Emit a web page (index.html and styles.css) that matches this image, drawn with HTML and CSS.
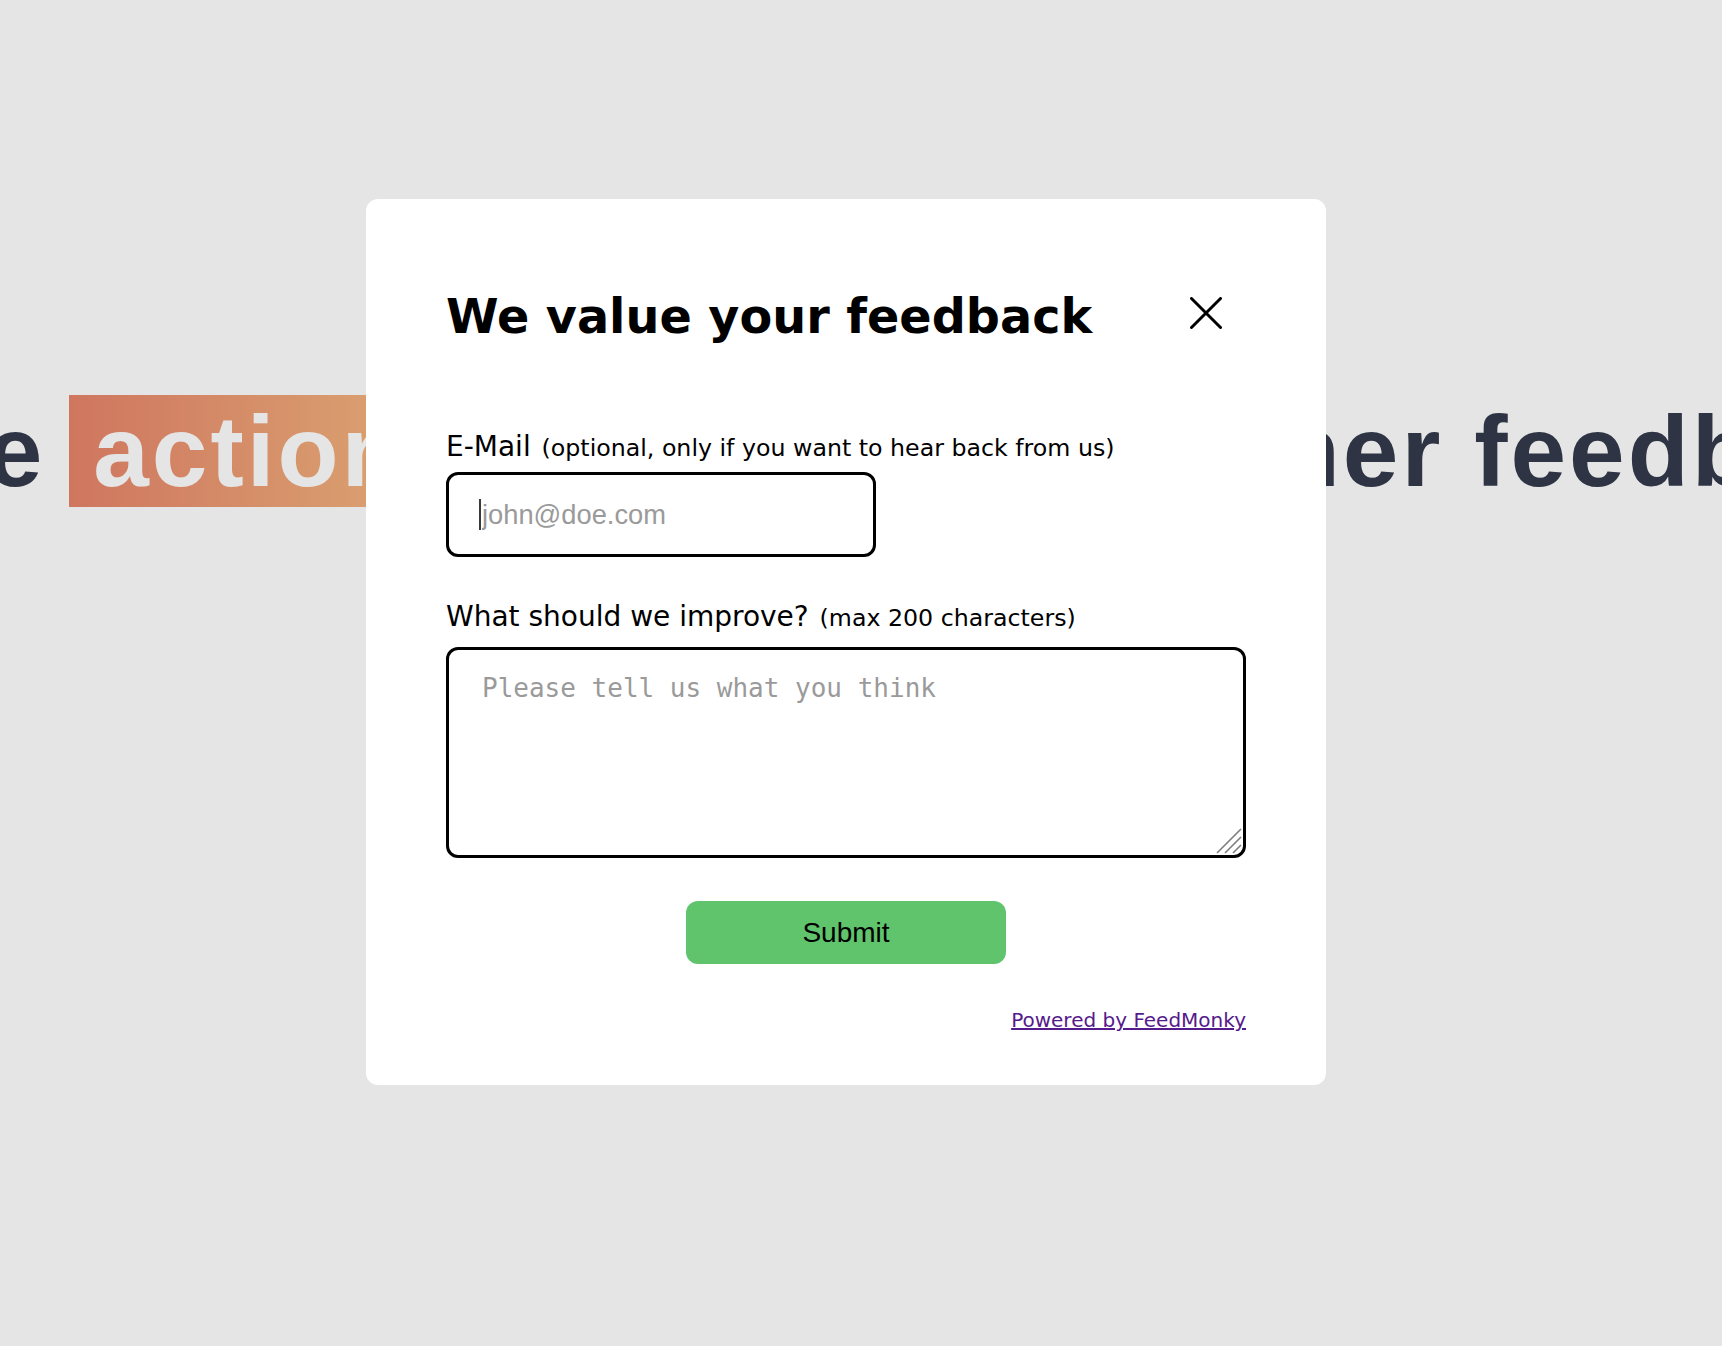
FILE: index.html
```html
<!DOCTYPE html>
<html lang="en">
<head>
<meta charset="utf-8">
<title>FeedMonky</title>
<link rel="stylesheet" href="styles.css">
</head>
<body>
  <main class="hero">
    <h2 class="hero-title">Drive <span class="hero-mark">action</span> based on customer feedback</h2>
  </main>

  <div class="modal" role="dialog" aria-labelledby="fm-title">
    <div class="modal-head">
      <h1 id="fm-title" class="modal-title">We value your feedback</h1>
      <button class="close-btn" type="button" aria-label="Close">
        <svg width="32" height="32" viewBox="0 0 32 32" fill="none" stroke="#000" stroke-width="3" stroke-linecap="round">
          <path d="M1.5 1.5 L30.5 30.5 M30.5 1.5 L1.5 30.5"/>
        </svg>
      </button>
    </div>

    <form class="modal-form">
      <label class="field-label" for="fm-email">E-Mail <span class="hint">(optional, only if you want to hear back from us)</span></label>
      <div class="email-wrap">
        <input id="fm-email" class="email-input" type="email" placeholder="john@doe.com">
        <span class="caret" aria-hidden="true"></span>
      </div>

      <label class="field-label field-label--second" for="fm-text">What should we improve? <span class="hint">(max 200 characters)</span></label>
      <div class="text-wrap">
        <textarea id="fm-text" class="text-input" placeholder="Please tell us what you think"></textarea>
        <svg class="resize-grip" width="26" height="26" viewBox="0 0 26 26" fill="none" stroke="#7d7d7d" stroke-width="1.6">
          <path d="M1 25 L25 1 M9 25 L25 9 M17 25 L25 17"/>
        </svg>
      </div>

      <div class="actions">
        <button class="submit-btn" type="button">Submit</button>
      </div>
    </form>

    <p class="powered"><a href="#" class="powered-link">Powered by FeedMonky</a></p>
  </div>
</body>
</html>
```

FILE: styles.css
```css
html, body {
  margin: 0;
  padding: 0;
}

body {
  background: #e5e5e5;
  width: 1722px;
  height: 1346px;
  overflow: hidden;
  position: relative;
}

.hero {
  display: flex;
  justify-content: center;
  padding-top: 394px;
}

.hero-title {
  margin: 0;
  padding-right: 10px;
  flex: none;
  white-space: nowrap;
  font-family: "Liberation Sans", Arial, sans-serif;
  font-weight: 700;
  font-size: 100px;
  line-height: 115px;
  letter-spacing: 3px;
  color: #2e3444;
}

.hero-mark {
  margin-left: -7px;
  padding: 0 39px 0 24px;
  color: #e5e5e5;
  background: linear-gradient(to right, #cf765f, #dca873);
}

.modal {
  position: absolute;
  left: 366px;
  top: 199px;
  width: 960px;
  box-sizing: border-box;
  padding: 89.5px 80px 53px;
  background: #fff;
  border-radius: 12px;
  font-family: "DejaVu Sans", Verdana, sans-serif;
  color: #000;
}

.modal-head {
  display: flex;
  justify-content: space-between;
  align-items: flex-start;
}

.modal-title {
  margin: 0;
  font-size: 47.7px;
  font-weight: 700;
  line-height: normal;
}

.close-btn {
  display: flex;
  align-items: center;
  justify-content: center;
  width: 48px;
  height: 48px;
  margin: 0 16px 0 0;
  padding: 0;
  border: none;
  background: transparent;
  cursor: pointer;
}

.modal-form {
  display: flex;
  flex-direction: column;
  align-items: flex-start;
  padding-top: 86px;
}

.field-label {
  display: block;
  font-size: 28px;
  line-height: normal;
  margin-bottom: 9.4px;
}

.field-label--second {
  margin-bottom: 14.4px;
}

.hint {
  margin-left: 2px;
  font-size: 23.7px;
}

.email-wrap {
  position: relative;
  margin: 0 0 43px;
}

.email-input {
  box-sizing: border-box;
  display: block;
  width: 430px;
  height: 85px;
  margin: 0;
  padding: 2px 30px 0 33px;
  border: 3px solid #000;
  border-radius: 12px;
  background: #fff;
  font-family: "Liberation Sans", Arial, sans-serif;
  font-size: 27.3px;
  color: #000;
  outline: none;
}

.email-input::placeholder {
  color: #9a9a9a;
}

.caret {
  position: absolute;
  left: 33px;
  top: 27px;
  width: 2px;
  height: 31px;
  background: #3a3a3a;
}

.text-wrap {
  position: relative;
  width: 800px;
  height: 211px;
}

.text-input {
  box-sizing: border-box;
  display: block;
  width: 800px;
  height: 211px;
  margin: 0;
  padding: 23px 30px 22px 33px;
  border: 3px solid #000;
  border-radius: 12px;
  background: #fff;
  font-family: "DejaVu Sans Mono", Menlo, monospace;
  font-size: 26px;
  color: #000;
  outline: none;
  resize: none;
}

.text-input::placeholder {
  color: #9a9a9a;
}

.resize-grip {
  position: absolute;
  right: 4px;
  bottom: 4px;
  pointer-events: none;
}

.actions {
  align-self: stretch;
  display: flex;
  justify-content: center;
  padding-top: 43px;
}

.submit-btn {
  width: 320px;
  height: 63px;
  border: none;
  border-radius: 12px;
  background: #5fc46b;
  font-family: "Liberation Sans", Arial, sans-serif;
  font-size: 28px;
  color: #000;
  cursor: pointer;
}

.powered {
  margin: 44px 0 0;
  text-align: right;
  font-size: 20px;
  line-height: normal;
}

.powered-link {
  color: #551a8b;
  text-decoration: underline;
}
```
